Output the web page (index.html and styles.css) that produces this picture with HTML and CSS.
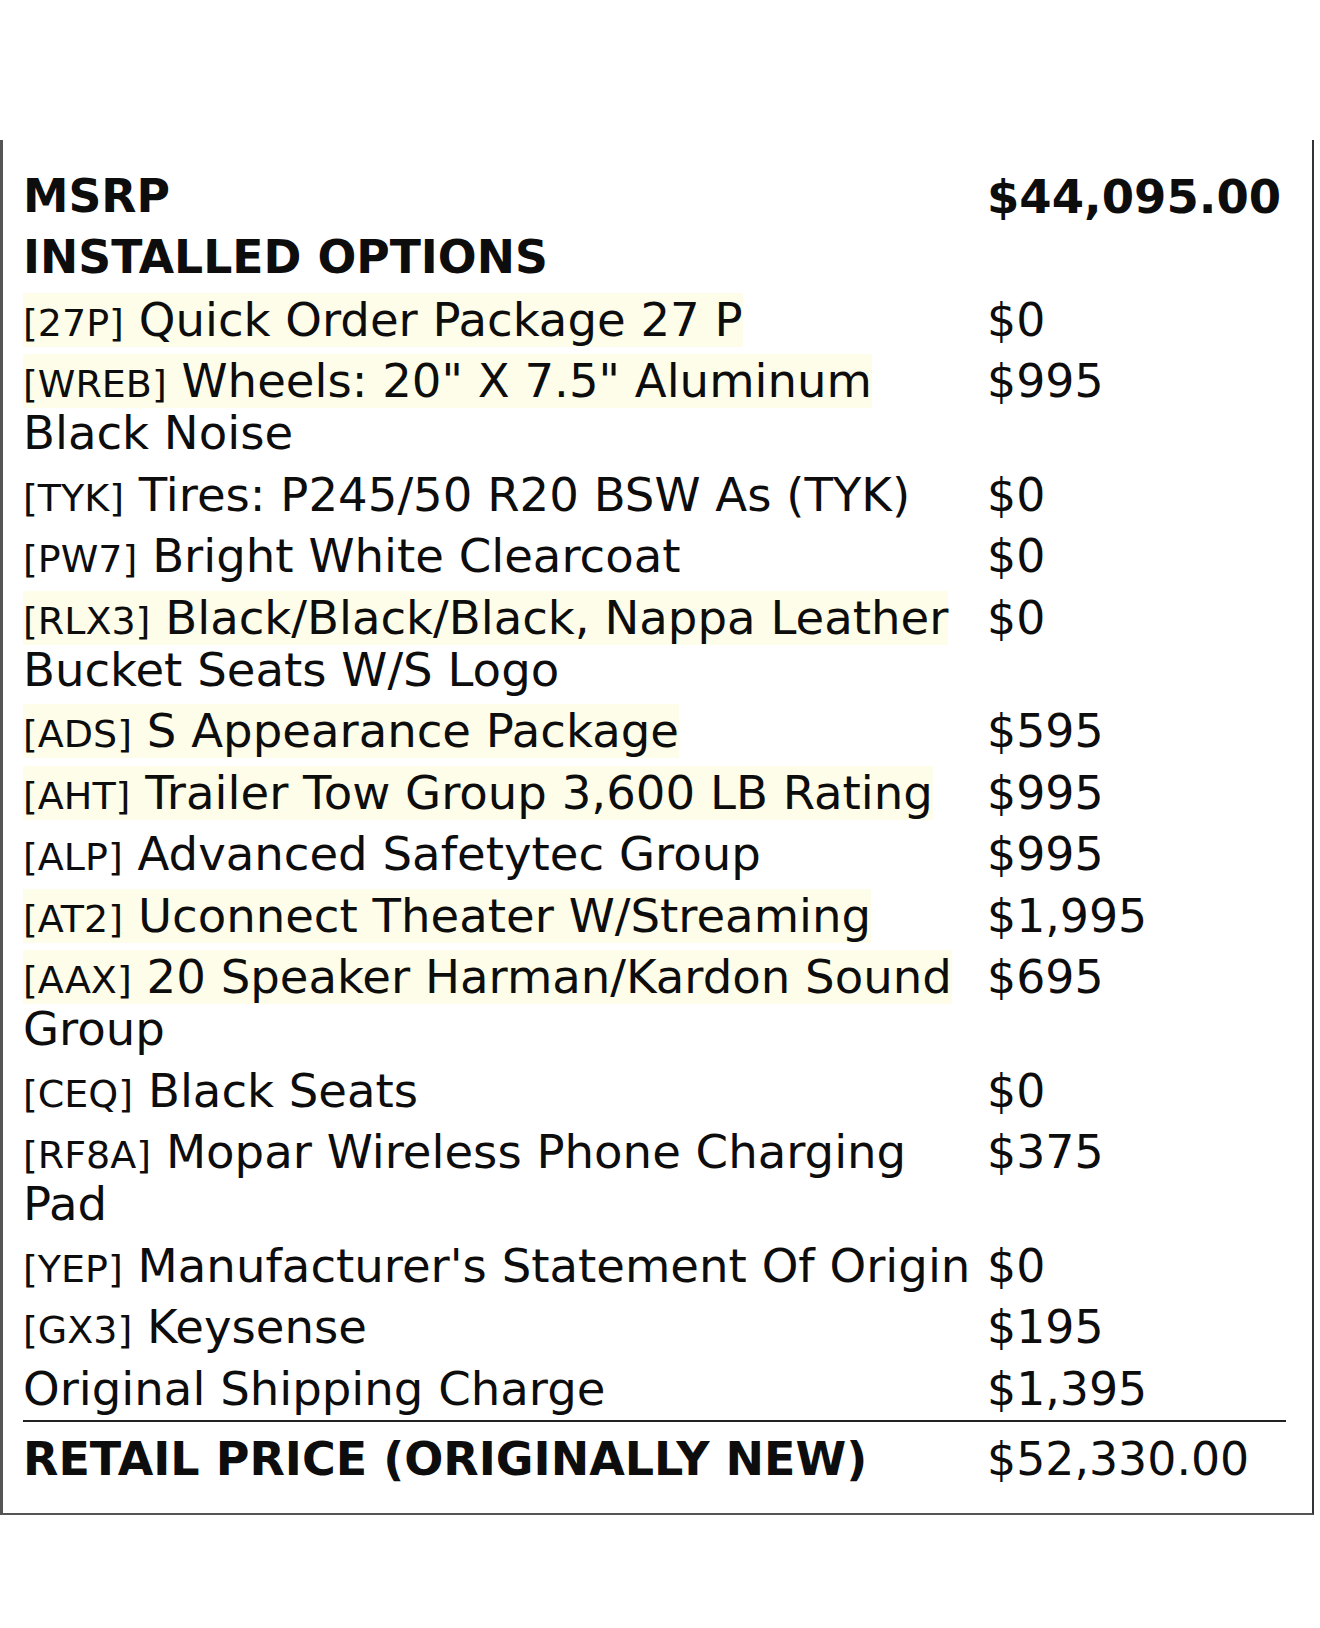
FILE: index.html
```html
<!DOCTYPE html>
<html lang="en">
<head>
<meta charset="utf-8">
<title>Window Sticker Pricing</title>
<link rel="stylesheet" href="styles.css">
</head>
<body>
<div class="sheet">
  <div class="row head"><div class="desc">MSRP</div><div class="price">$44,095.00</div></div>
  <div class="row head"><div class="desc">INSTALLED OPTIONS</div><div class="price"></div></div>
  <div class="row"><div class="desc"><span class="hl"><span class="code">[27P]</span> Quick Order Package 27 P</span></div><div class="price">$0</div></div>
  <div class="row"><div class="desc"><span class="hl"><span class="code">[WREB]</span> Wheels: 20" X 7.5" Aluminum</span> Black Noise</div><div class="price">$995</div></div>
  <div class="row"><div class="desc"><span class="code">[TYK]</span> Tires: P245/50 R20 BSW As (TYK)</div><div class="price">$0</div></div>
  <div class="row"><div class="desc"><span class="code">[PW7]</span> Bright White Clearcoat</div><div class="price">$0</div></div>
  <div class="row"><div class="desc"><span class="hl"><span class="code">[RLX3]</span> Black/Black/Black, Nappa Leather</span> Bucket Seats W/S Logo</div><div class="price">$0</div></div>
  <div class="row"><div class="desc"><span class="hl"><span class="code">[ADS]</span> S Appearance Package</span></div><div class="price">$595</div></div>
  <div class="row"><div class="desc"><span class="hl"><span class="code">[AHT]</span> Trailer Tow Group 3,600 LB Rating</span></div><div class="price">$995</div></div>
  <div class="row"><div class="desc"><span class="code">[ALP]</span> Advanced Safetytec Group</div><div class="price">$995</div></div>
  <div class="row"><div class="desc"><span class="hl"><span class="code">[AT2]</span> Uconnect Theater W/Streaming</span></div><div class="price">$1,995</div></div>
  <div class="row"><div class="desc"><span class="hl"><span class="code">[AAX]</span> 20 Speaker Harman/Kardon Sound</span> Group</div><div class="price">$695</div></div>
  <div class="row"><div class="desc"><span class="code">[CEQ]</span> Black Seats</div><div class="price">$0</div></div>
  <div class="row"><div class="desc"><span class="code">[RF8A]</span> <span>Mopar Wireless Phone Charging</span> <span>Pad</span></div><div class="price">$375</div></div>
  <div class="row"><div class="desc"><span class="code">[YEP]</span> Manufacturer's Statement Of Origin</div><div class="price">$0</div></div>
  <div class="row"><div class="desc"><span class="code">[GX3]</span> Keysense</div><div class="price">$195</div></div>
  <div class="row"><div class="desc">Original Shipping Charge</div><div class="price">$1,395</div></div>
  <div class="row total"><div class="desc">RETAIL PRICE (ORIGINALLY NEW)</div><div class="price">$52,330.00</div></div>
</div>
</body>
</html>
```

FILE: styles.css
```css
html, body {
  margin: 0;
  padding: 0;
  background: #ffffff;
}

body {
  font-family: "DejaVu Sans", "Liberation Sans", sans-serif;
  color: #0d0d0d;
}

.sheet {
  box-sizing: border-box;
  width: 1314px;
  margin-top: 140px;
  padding: 26px 26px 24px 20px;
  border-left: 3px solid #555555;
  border-right: 2px solid #333333;
  border-bottom: 2px solid #555555;
}

.row {
  display: grid;
  grid-template-columns: 964px 1fr;
  padding: 4.75px 0;
  font-size: 46px;
  line-height: 52px;
}

.desc {
  font-size: 46.6px;
}

.price {
  font-size: 45.8px;
}

.head {
  font-weight: bold;
}

.head .desc {
  font-size: 45.7px;
}

.head .price {
  font-size: 46.5px;
}

.code {
  font-size: 38px;
  line-height: 1;
}

.hl {
  background: #fdfde9;
  line-height: 1;
}

.total {
  border-top: 2px solid #222222;
  padding-top: 11px;
}

.total .desc {
  font-weight: bold;
  font-size: 46px;
}
```
